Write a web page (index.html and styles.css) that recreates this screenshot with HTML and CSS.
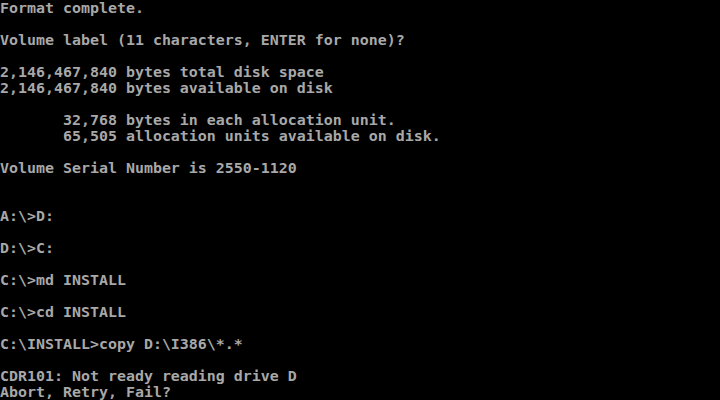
FILE: index.html
```
<!DOCTYPE html>
<html lang="en">

<head>
    <meta charset="UTF-8">
    <meta name="viewport" content="width=device-width, initial-scale=1.0">
    <title>MS-DOS Setup</title>
    <link rel="stylesheet" href="styles.css">
</head>

<body>
    <pre class="screen">Format complete.

Volume label (11 characters, ENTER for none)?

2,146,467,840 bytes total disk space
2,146,467,840 bytes available on disk

       32,768 bytes in each allocation unit.
       65,505 allocation units available on disk.

Volume Serial Number is 2550-1120


A:\>D:

D:\>C:

C:\>md INSTALL

C:\>cd INSTALL

C:\INSTALL>copy D:\I386\*.*

CDR101: Not ready reading drive D
Abort, Retry, Fail?</pre>
</body>

</html>
```

FILE: styles.css
```
body {
    margin: 0;
    background: #000;
    width: 720px;
    height: 400px;
    overflow: hidden;
}

.screen {
    margin: 0;
    font-family: "DejaVu Sans Mono", "Liberation Mono", monospace;
    font-size: 14.95px;
    font-weight: bold;
    line-height: 16px;
    color: #a8a8a8;
    white-space: pre;
}
```
